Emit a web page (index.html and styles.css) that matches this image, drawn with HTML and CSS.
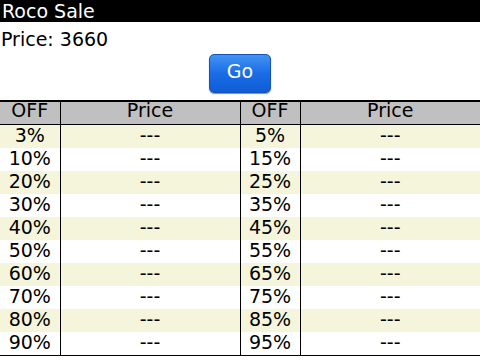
FILE: index.html
```html
<!DOCTYPE html>
<html lang="en">
<head>
  <meta charset="UTF-8">
  <meta name="viewport" content="width=device-width, initial-scale=1.0">
  <title>Roco Sale</title>
  <link rel="stylesheet" href="styles.css">
</head>
<body>
  <!-- Title bar -->
  <div class="title-bar">Roco Sale</div>

  <div class="price">Price: <span id="price">3660</span></div>

  <div class="actions">
    <button id="go" class="go-button">Go</button>
  </div>

  <!-- Discount table -->
  <table class="sale-table">
    <colgroup>
      <col class="col-off">
      <col class="col-price">
      <col class="col-off2">
      <col class="col-price2">
    </colgroup>
    <thead>
      <tr>
        <th>OFF</th>
        <th>Price</th>
        <th>OFF</th>
        <th>Price</th>
      </tr>
    </thead>
    <tbody>
      <tr><td>3%</td><td>---</td><td>5%</td><td>---</td></tr>
      <tr><td>10%</td><td>---</td><td>15%</td><td>---</td></tr>
      <tr><td>20%</td><td>---</td><td>25%</td><td>---</td></tr>
      <tr><td>30%</td><td>---</td><td>35%</td><td>---</td></tr>
      <tr><td>40%</td><td>---</td><td>45%</td><td>---</td></tr>
      <tr><td>50%</td><td>---</td><td>55%</td><td>---</td></tr>
      <tr><td>60%</td><td>---</td><td>65%</td><td>---</td></tr>
      <tr><td>70%</td><td>---</td><td>75%</td><td>---</td></tr>
      <tr><td>80%</td><td>---</td><td>85%</td><td>---</td></tr>
      <tr><td>90%</td><td>---</td><td>95%</td><td>---</td></tr>
    </tbody>
  </table>
</body>
</html>
```

FILE: styles.css
```css
body {
  font-family: "DejaVu Sans", sans-serif;
  font-size: 19px;
  margin: 0;
  color: #000;
  background: #fff;
}

.title-bar {
  background: #000;
  color: #fff;
  height: 22px;
  line-height: 22px;
  padding-left: 2px;
}

.price {
  line-height: 22px;
  padding: 6px 0 0 1px;
}

.actions {
  text-align: center;
  padding: 4px 0 7px;
  line-height: 0;
}

.go-button {
  font-family: "DejaVu Sans", sans-serif;
  font-size: 19px;
  width: 62px;
  height: 39px;
  line-height: 33px;
  padding: 0 0 6px;
  color: #fff;
  background: linear-gradient(#4393f2, #1a6ce6 50%, #0f5cd6);
  border: 1px solid #1552b8;
  border-radius: 5px;
  box-shadow: 0 1px 1px rgba(0, 0, 0, 0.45);
}

.sale-table {
  width: 100%;
  border-collapse: collapse;
  table-layout: fixed;
  border-top: 2px solid #000;
  border-bottom: 1px solid #000;
}

.col-off,
.col-off2 {
  width: 60px;
}

.col-price,
.col-price2 {
  width: 180px;
}

th,
td {
  padding: 0;
  text-align: center;
  font-weight: normal;
  border-left: 1px solid #000;
}

th:first-child,
td:first-child {
  border-left: none;
}

th {
  background: #c0c0c0;
  height: 22px;
  line-height: 16px;
  padding-bottom: 6px;
  box-sizing: border-box;
  border-bottom: 1px solid #000;
}

td {
  height: 23px;
  line-height: 21px;
  padding-bottom: 2px;
  box-sizing: border-box;
}

tbody tr:nth-child(odd) td {
  background: #f5f5dc;
}
```
